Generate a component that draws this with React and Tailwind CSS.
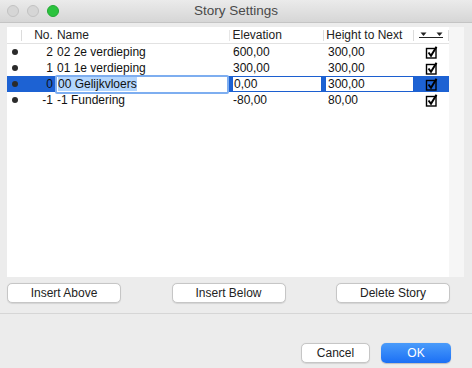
import React from 'react';

const rows = [
  { no: '2', name: '02 2e verdieping', elev: '600,00', height: '300,00' },
  { no: '1', name: '01 1e verdieping', elev: '300,00', height: '300,00' },
  { no: '0', name: '00 Gelijkvloers', elev: '0,00', height: '300,00', selected: true },
  { no: '-1', name: '-1 Fundering', elev: '-80,00', height: '80,00' },
];

function Check() {
  return (
    <svg width="13" height="13" viewBox="0 0 13 13">
      <rect x="1.5" y="2.5" width="9.5" height="9.5" fill="none" stroke="#000" strokeWidth="1.4" />
      <path d="M3.5 6.5 L6 9.8 L11.5 0.8" fill="none" stroke="#000" strokeWidth="2" />
    </svg>
  );
}

function Arrows() {
  return (
    <svg width="26" height="8" viewBox="0 0 26 8">
      <path d="M2.5 1.5 L8.5 1.5 L5.5 5 Z" fill="#222" />
      <path d="M18.5 1.5 L24.5 1.5 L21.5 5 Z" fill="#222" />
      <line x1="1" y1="6.5" x2="25" y2="6.5" stroke="#222" strokeWidth="1" />
    </svg>
  );
}

function Btn({ children, w = 'w-[114px]' }) {
  return (
    <button className={`${w} h-[20px] bg-white border border-[#c6c6c6] rounded-[5px] text-[12px] text-[#222] shadow-[0_0.5px_1px_rgba(0,0,0,0.1)]`}>
      {children}
    </button>
  );
}

export default function App() {
  return (
    <div className="w-[472px] h-[368px] bg-[#ececec] flex flex-col font-['Liberation_Sans',Arial,sans-serif] text-[12px] text-[#111] overflow-hidden">
      {/* title bar */}
      <div className="h-[23px] grid grid-cols-[1fr_auto_1fr] items-center bg-gradient-to-b from-[#ebebeb] to-[#d6d6d6] border-b border-[#c4c4c4]">
        <div className="flex items-center gap-[8px] pl-[7px]">
          <span className="w-[12px] h-[12px] rounded-full bg-[#d6d6d6] border border-[#c2c2c2]" />
          <span className="w-[12px] h-[12px] rounded-full bg-[#d6d6d6] border border-[#c2c2c2]" />
          <span className="w-[12px] h-[12px] rounded-full bg-[#2bc33e] border border-[#22a834]" />
        </div>
        <div className="text-[13.5px] text-[#4a4a4a]">Story Settings</div>
        <div />
      </div>

      {/* table */}
      <div className="mt-[4px] ml-[7px] w-[457px] h-[250px] flex">
        <div className="w-[442px] bg-white flex flex-col">
          <div className="h-[17px] flex items-center border-b border-[#e2e2e2] text-[#222]">
            <div className="w-[15px] h-full flex justify-end items-center">
              <span className="w-px h-[11px] bg-[#dcdcdc]" />
            </div>
            <div className="w-[31px] text-right">No.</div>
            <div className="w-[176px] pl-[4px]">Name</div>
            <div className="w-px h-[11px] bg-[#e6e6e6]" />
            <div className="w-[94px] pl-[3px]">Elevation</div>
            <div className="w-px h-[11px] bg-[#dcdcdc]" />
            <div className="w-[89px] pl-[2px]">Height to Next</div>
            <div className="w-px h-[11px] bg-[#dcdcdc]" />
            <div className="w-[34px] flex justify-center">
              <Arrows />
            </div>
            <div className="w-px h-[11px] bg-[#dcdcdc]" />
          </div>
          {rows.map((r) => (
            <div key={r.no} className={`h-[16px] flex items-center ${r.selected ? 'bg-[#1d62d3]' : ''}`}>
              <div className="w-[15px] flex justify-center">
                <span className="w-[6px] h-[6px] rounded-full bg-[#2b2b2b]" />
              </div>
              <div className="w-[31px] text-right">{r.no}</div>
              {r.selected ? (
                <>
                  <div className="w-[177px] pl-[2px] flex items-center">
                    <div className="w-[174px] h-[19px] bg-white border-[2px] border-[#7eaef0] rounded-[2px] flex items-center pl-[1px]">
                      <span className="bg-[#b3d6fe] leading-[14px]">{r.name}</span>
                    </div>
                  </div>
                  <div className="w-[94px] pl-[2px] flex items-center">
                    <div className="w-[90px] h-[16px] bg-white border border-[#1c5fd0] flex items-center pl-[1px]">{r.elev}</div>
                  </div>
                  <div className="w-[90px] pl-[1px] flex items-center">
                    <div className="w-[89px] h-[16px] bg-white border border-[#1c5fd0] flex items-center pl-[2px]">{r.height}</div>
                  </div>
                </>
              ) : (
                <>
                  <div className="w-[177px] pl-[4px]">{r.name}</div>
                  <div className="w-[94px] pl-[3px]">{r.elev}</div>
                  <div className="w-[90px] pl-[4px]">{r.height}</div>
                </>
              )}
              <div className="w-[35px] flex justify-center">
                <Check />
              </div>
            </div>
          ))}
        </div>
        <div className="w-[15px] bg-[#f6f6f6]" />
      </div>

      {/* row buttons */}
      <div className="mt-[6px] ml-[7px] w-[443px] flex justify-between">
        <Btn>Insert Above</Btn>
        <Btn>Insert Below</Btn>
        <Btn>Delete Story</Btn>
      </div>

      <div className="mt-[10px] h-px bg-[#d6d6d6]" />

      <div className="mt-[29px] mr-[21px] flex justify-end gap-[11px]">
        <Btn w="w-[69px]">Cancel</Btn>
        <button className="w-[70px] h-[20px] rounded-[5px] bg-gradient-to-b from-[#4a9bfa] to-[#1a6ff5] text-white text-[12px] shadow-[0_0.5px_1px_rgba(0,0,0,0.2)]">
          OK
        </button>
      </div>
    </div>
  );
}
